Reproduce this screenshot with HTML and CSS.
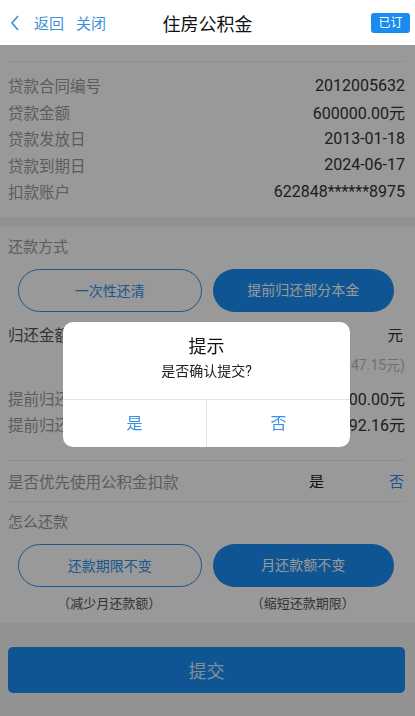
FILE: index.html
```html
<!DOCTYPE html>
<html lang="zh-CN">
<head>
    <meta charset="UTF-8">
    <meta name="viewport" content="width=device-width, initial-scale=1.0">
    <title>住房公积金</title>
    <link rel="stylesheet" href="styles.css">
</head>
<body>

    <!-- 顶部导航 -->
    <div class="nav-bar">
        <div class="nav-left">
            <svg class="back-icon" width="10" height="16" viewBox="0 0 10 16">
                <polyline points="8,1 2,8 8,15" fill="none" stroke="#3d8fd8" stroke-width="1.6"/>
            </svg>
            <span class="nav-link">返回</span>
            <span class="nav-link">关闭</span>
        </div>
        <div class="nav-title">住房公积金</div>
        <div class="nav-badge">已订</div>
    </div>

    <div class="page">
        <!-- 贷款信息 -->
        <div class="section loan-info">
            <div class="top-line"></div>
            <div class="info-row"><span class="label">贷款合同编号</span><span class="value">2012005632</span></div>
            <div class="info-row"><span class="label">贷款金额</span><span class="value">600000.00元</span></div>
            <div class="info-row"><span class="label">贷款发放日</span><span class="value">2013-01-18</span></div>
            <div class="info-row"><span class="label">贷款到期日</span><span class="value">2024-06-17</span></div>
            <div class="info-row"><span class="label">扣款账户</span><span class="value">622848******8975</span></div>
        </div>

        <!-- 还款设置 -->
        <div class="section repay">
            <div class="sec-title">还款方式</div>
            <div class="pill-group">
                <div class="pill outline">一次性还清</div>
                <div class="pill filled">提前归还部分本金</div>
            </div>

            <div class="amount-row">
                <span class="label dark">归还金额</span>
                <span class="amount-input">10000</span>
                <span class="unit">元</span>
            </div>
            <div class="hint">(最高可还452747.15元)</div>

            <div class="calc">
                <div class="info-row"><span class="label">提前归还本金</span><span class="value">10000.00元</span></div>
                <div class="info-row"><span class="label">提前归还利息</span><span class="value">2992.16元</span></div>
            </div>

            <div class="choice-row">
                <span class="label">是否优先使用公积金扣款</span>
                <span class="opt yes">是</span>
                <span class="opt no">否</span>
            </div>

            <div class="sec-title">怎么还款</div>
            <div class="pill-group">
                <div class="pill outline">还款期限不变</div>
                <div class="pill filled">月还款额不变</div>
            </div>
            <div class="caption-group">
                <span class="caption">（减少月还款额）</span>
                <span class="caption">（缩短还款期限）</span>
            </div>
        </div>

        <div class="submit-wrap">
            <button class="submit-btn">提交</button>
        </div>
    </div>

    <!-- 确认弹窗 -->
    <div class="mask">
        <div class="dialog">
            <div class="dialog-body">
                <div class="dialog-title">提示</div>
                <div class="dialog-msg">是否确认提交?</div>
            </div>
            <div class="dialog-btns">
                <span class="dialog-btn">是</span>
                <span class="dialog-btn">否</span>
            </div>
        </div>
    </div>

</body>
</html>
```

FILE: styles.css
```css
body {
    margin: 0;
    padding: 0;
    font-family: Roboto, "Noto Sans CJK SC", sans-serif;
    background-color: #f4f4f4;
    height: 716px;
    overflow: hidden;
}
.nav-bar {
    height: 45px;
    background-color: #fff;
    display: flex;
    align-items: center;
    position: relative;
}
.nav-left {
    display: flex;
    align-items: center;
    padding-left: 10px;
}
.back-icon {
    margin-right: 14px;
}
.nav-link {
    font-size: 15px;
    color: #3d8fd8;
    margin-right: 12px;
}
.nav-title {
    position: absolute;
    left: 0;
    right: 0;
    text-align: center;
    font-size: 18px;
    color: #111;
    pointer-events: none;
}
.nav-badge {
    margin-left: auto;
    margin-right: 5px;
    width: 39px;
    height: 20px;
    line-height: 20px;
    text-align: center;
    background-color: #1a8cf0;
    color: #fff;
    font-size: 12px;
    border-radius: 3px;
}
.section {
    background-color: #fff;
    padding: 0 10px 0 8px;
}
.loan-info {
    padding-bottom: 12px;
}
.top-line {
    height: 16px;
    border-bottom: 1px solid #ececec;
    margin-bottom: 10px;
}
.info-row {
    display: flex;
    justify-content: space-between;
    align-items: center;
    height: 26.5px;
}
.label {
    font-size: 15.5px;
    color: #9a9a9a;
}
.label.dark {
    color: #555;
}
.value {
    font-size: 16px;
    color: #333;
}
.repay {
    margin-top: 10px;
    padding-bottom: 4px;
}
.sec-title {
    height: 40px;
    line-height: 40px;
    font-size: 15px;
    color: #9a9a9a;
}
.pill-group {
    display: flex;
    gap: 11px;
    margin: 2px 11px 0 10px;
}
.pill {
    flex: 1;
    height: 43px;
    line-height: 43px;
    box-sizing: border-box;
    text-align: center;
    font-size: 14px;
    border-radius: 22px;
}
.pill.outline {
    border: 1px solid #2d8ff0;
    color: #2d8ff0;
}
.pill.filled {
    background-color: #1a8ef5;
    color: #fff;
}
.amount-row {
    display: flex;
    align-items: center;
    height: 44px;
}
.amount-input {
    margin-left: auto;
    font-size: 15px;
    color: #ccc;
    margin-right: 50px;
}
.unit {
    font-size: 15.5px;
    color: #333;
    margin-right: 2px;
}
.hint {
    height: 18px;
    line-height: 18px;
    text-align: right;
    font-size: 14px;
    color: #bbb;
}
.calc {
    margin-top: 11px;
    padding-bottom: 22px;
    border-bottom: 1px solid #ececec;
}
.choice-row {
    display: flex;
    align-items: center;
    height: 40px;
    border-bottom: 1px solid #ececec;
}
.opt {
    font-size: 15px;
}
.opt.yes {
    margin-left: auto;
    color: #222;
    margin-right: 65px;
}
.opt.no {
    color: #2d8ff0;
    margin-right: 1px;
}
.caption-group {
    display: flex;
    gap: 11px;
    margin: 0 11px 0 10px;
    height: 32px;
    align-items: center;
}
.caption {
    flex: 1;
    text-align: center;
    font-size: 13px;
    color: #555;
}
.submit-wrap {
    padding: 24px 10px 0 8px;
}
.submit-btn {
    width: 100%;
    height: 46px;
    border: none;
    border-radius: 5px;
    background-color: #1a8ef5;
    color: rgba(255, 255, 255, 0.85);
    font-size: 18px;
    font-family: Roboto, "Noto Sans CJK SC", sans-serif;
}
.mask {
    position: fixed;
    top: 45px;
    left: 0;
    right: 0;
    bottom: 0;
    background-color: rgba(0, 0, 0, 0.4);
}
.dialog {
    position: absolute;
    top: 277px;
    left: 63px;
    width: 287px;
    background-color: #fff;
    border-radius: 10px;
    overflow: hidden;
}
.dialog-body {
    padding: 14px 0 17px;
    text-align: center;
    border-bottom: 1px solid #e2e2e2;
}
.dialog-title {
    font-size: 18px;
    line-height: 22px;
    color: #111;
}
.dialog-msg {
    font-size: 14px;
    line-height: 22px;
    margin-top: 2px;
    color: #222;
}
.dialog-btns {
    display: flex;
    height: 47px;
}
.dialog-btn {
    flex: 1;
    text-align: center;
    line-height: 47px;
    font-size: 16px;
    color: #3a8ee6;
}
.dialog-btn + .dialog-btn {
    border-left: 1px solid #e2e2e2;
}
```
